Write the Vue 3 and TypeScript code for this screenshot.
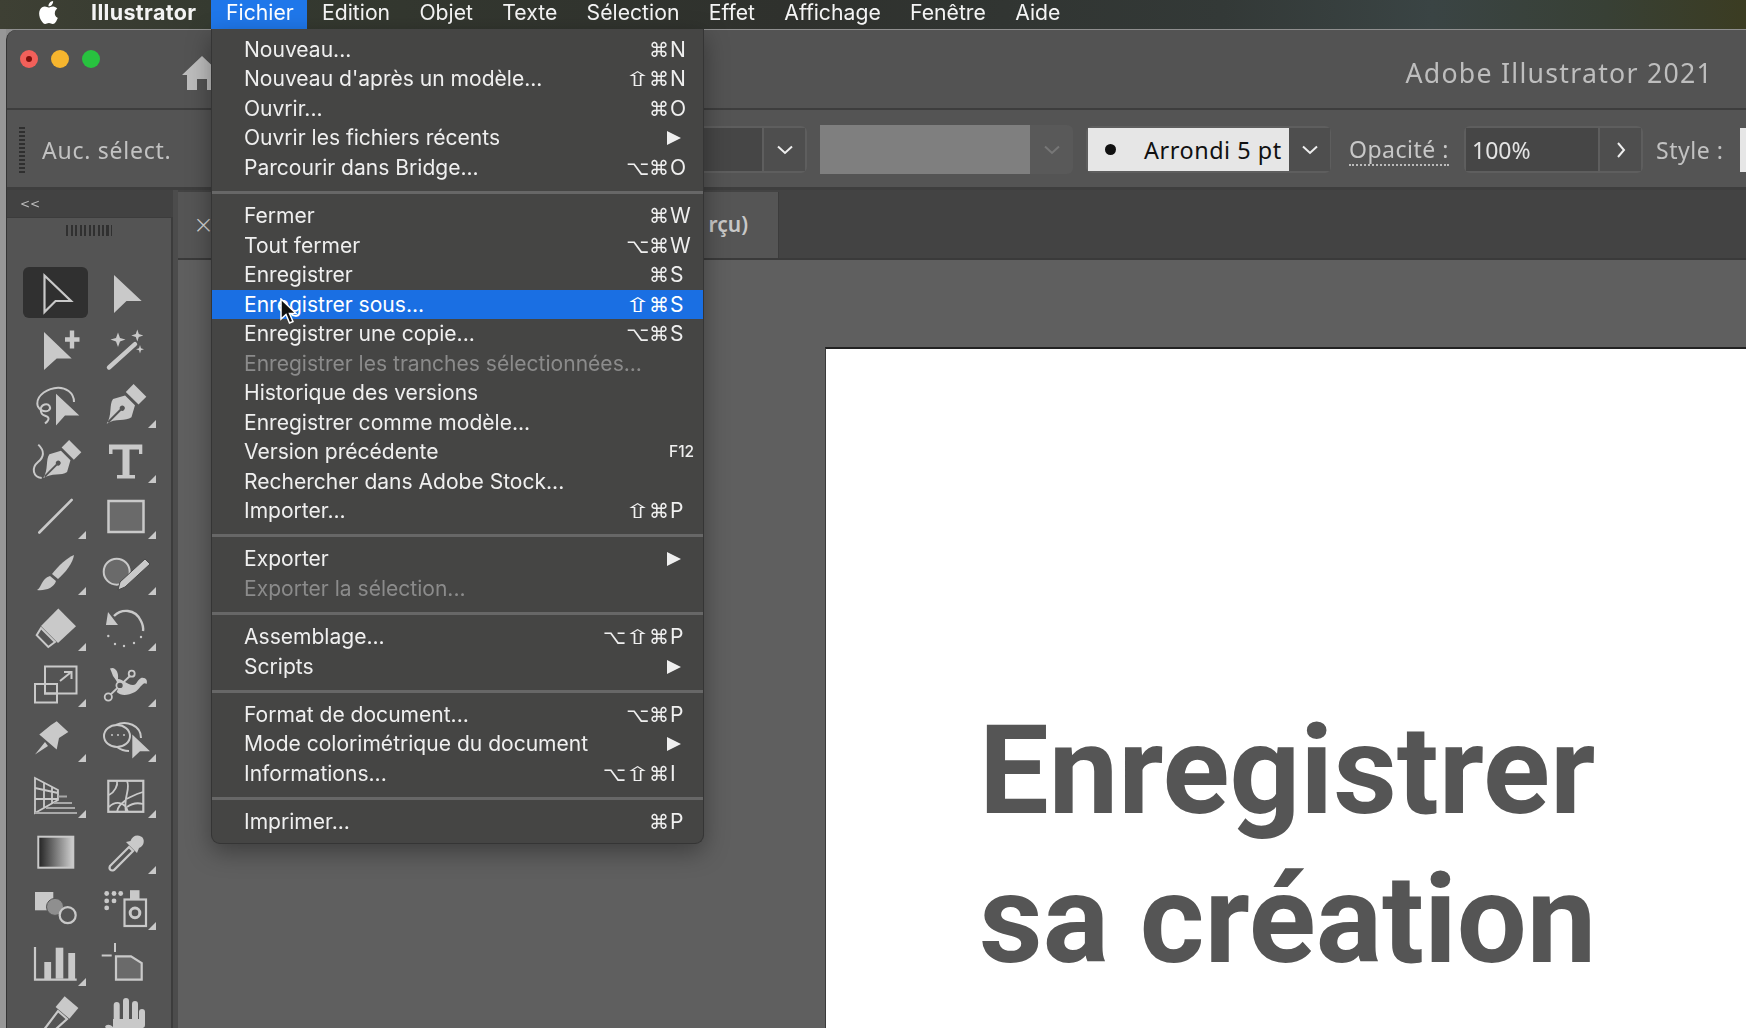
<script setup lang="ts">
interface Entry { label?: string; mods?: string; key?: string; small?: boolean; sub?: boolean; off?: boolean; on?: boolean; sep?: boolean }
const menus = ['Edition', 'Objet', 'Texte', 'Sélection', 'Effet', 'Affichage', 'Fenêtre', 'Aide']
const entries: Entry[] = [
  { label: 'Nouveau...', mods: '⌘', key: 'N' },
  { label: "Nouveau d'après un modèle...", mods: '⇧⌘', key: 'N' },
  { label: 'Ouvrir...', mods: '⌘', key: 'O' },
  { label: 'Ouvrir les fichiers récents', sub: true },
  { label: 'Parcourir dans Bridge...', mods: '⌥⌘', key: 'O' },
  { sep: true },
  { label: 'Fermer', mods: '⌘', key: 'W' },
  { label: 'Tout fermer', mods: '⌥⌘', key: 'W' },
  { label: 'Enregistrer', mods: '⌘', key: 'S' },
  { label: 'Enregistrer sous...', mods: '⇧⌘', key: 'S', on: true },
  { label: 'Enregistrer une copie...', mods: '⌥⌘', key: 'S' },
  { label: 'Enregistrer les tranches sélectionnées...', off: true },
  { label: 'Historique des versions' },
  { label: 'Enregistrer comme modèle...' },
  { label: 'Version précédente', key: 'F12', small: true },
  { label: 'Rechercher dans Adobe Stock...' },
  { label: 'Importer...', mods: '⇧⌘', key: 'P' },
  { sep: true },
  { label: 'Exporter', sub: true },
  { label: 'Exporter la sélection...', off: true },
  { sep: true },
  { label: 'Assemblage...', mods: '⌥⇧⌘', key: 'P' },
  { label: 'Scripts', sub: true },
  { sep: true },
  { label: 'Format de document...', mods: '⌥⌘', key: 'P' },
  { label: 'Mode colorimétrique du document', sub: true },
  { label: 'Informations...', mods: '⌥⇧⌘', key: 'I' },
  { sep: true },
  { label: 'Imprimer...', mods: '⌘', key: 'P' },
]

const C = '#c9c9c9'
const BG = '#545454'
const nib = (t: string, s = 1) => `<g transform="${t} scale(${s})"><path fill="${C}" d="M0 0C-2-10-12-15-13-22L-7-33H7L13-22C12-15 2-10 0 0Z"/><path stroke="${BG}" stroke-width="2" d="M0-2V-20"/><circle cx="0" cy="-22" r="2.6" fill="${BG}"/><rect x="-9" y="-47" width="18" height="11" fill="${C}"/></g>`
const arrow = 'M23 11L50.7 37H35.5L23 49Z'
const icons: { svg: string; corner?: boolean }[] = [
  { svg: `<path d="M23.5 11.5L50 37H34.5L23.5 48Z" fill="none" stroke="${C}" stroke-width="2.2"/>` },
  { svg: `<path d="${arrow}" fill="${C}"/>` },
  { svg: `<path d="M23 12L50.7 38.5H35.7L23 50Z" fill="${C}"/><path d="M51 10.5V28.5M44 19.5H58.5" stroke="${C}" stroke-width="4.4"/>` },
  { svg: `<path d="M18 47.5L44 24.2" stroke="${C}" stroke-width="4.4" stroke-linecap="round"/><path d="M27 12.5L29 18 34.5 19.5 29 21.5 27 27 25 21.5 19.5 19.5 25 18ZM46.3 9.5L47.8 14 52.3 15.5 47.8 17 46.3 21.5 44.8 17 40.3 15.5 44.8 14ZM49 25L50 28.2 53 29.2 50 30.2 49 33.4 48 30.2 45 29.2 48 28.2Z" fill="${C}"/>` },
  { svg: `<path d="M35 17.7L58.3 39.4H44L35 49.4Z" fill="${C}"/><path d="M53 26C53 16 44 11.5 37 11.7C27 12 16 19 16.3 27.7C16.6 33 23 37 27.5 34.5C31 32 28 27 23.5 28.5C18 30.5 19 38 23.5 39.5C28 41 29.5 43 24 47.5" fill="none" stroke="${C}" stroke-width="2"/>` },
  { svg: nib('translate(15.7 47.7) rotate(45)', 1), corner: true },
  { svg: `<path d="M17.3 13.6C24 20 23 26 17 31C10 37 12 46 20.7 47" fill="none" stroke="${C}" stroke-width="2"/>` + nib('translate(22.3 47) rotate(45)', .96) },
  { svg: `<path d="M18 13.6H51.3V23H48V18.5H38.5V44H44V47.5H26V44H31.5V18.5H21.5V23H18Z" fill="${C}"/>`, corner: true },
  { svg: `<path d="M18.3 45.5L50.7 12.8" stroke="${C}" stroke-width="2.6" stroke-linecap="round"/>`, corner: true },
  { svg: `<rect x="17.5" y="14" width="35" height="31" fill="#6a6a6a" stroke="${C}" stroke-width="2.5"/>`, corner: true },
  { svg: `<path d="M53 12C52 20 44 30 37 36L31 31C38 22 46 15 53 12Z" fill="${C}"/><path d="M29 33L35 38C33 45 24 48 16 47C21 44 20 36 29 33Z" fill="${C}"/>`, corner: true },
  { svg: `<circle cx="25.7" cy="28.7" r="13" fill="#6a6a6a" stroke="${C}" stroke-width="2"/><path d="M54 16L59 21 34 44 27 47 29 39Z" fill="${C}" stroke="#484848" stroke-width="1"/>`, corner: true },
  { svg: `<path d="M37.3 9.5L55 27.2 37 44 20 27Z" fill="${C}"/><path d="M20 29L34 43 27.3 48 15.7 36.2Z" fill="none" stroke="${C}" stroke-width="2"/>`, corner: true },
  { svg: `<path d="M23 17C30 10 44 9 50 22C52 26 52.5 29 52 32" fill="none" stroke="${C}" stroke-width="2.4"/><path d="M17 13L27 26 15 26Z" fill="${C}"/><g fill="${C}"><circle cx="50" cy="38" r="1.2"/><circle cx="43" cy="44" r="1.2"/><circle cx="33" cy="47" r="1.2"/><circle cx="24" cy="45" r="1.2"/><circle cx="17.3" cy="37" r="1.2"/></g>`, corner: true },
  { svg: `<g fill="none" stroke="${C}" stroke-width="2"><rect x="24" y="11.5" width="31.5" height="27"/><rect x="14" y="29" width="22" height="18.5"/><rect x="24" y="29" width="12" height="9.5"/></g><path d="M39 26L49 18M43 17H50.5V24" fill="none" stroke="${C}" stroke-width="2"/>`, corner: true },
  { svg: `<path d="M19 13.5C24 11 28 17 27 24C32 24 36 30 42 30C46 30 46 25 50 23C55 22 57 26 55.5 29C52 26 50 33 44 37C36 41 30 41 25.7 37C30 30 24 24 22 21C21 18 20 16 19 13.5Z" fill="${C}"/><g fill="${BG}" stroke="${C}" stroke-width="1.8"><path d="M17 42L41 19" fill="none"/><circle cx="17.3" cy="42" r="3.6"/><circle cx="40.7" cy="18.7" r="3"/><circle cx="29" cy="30.4" r="3.6"/></g>`, corner: true },
  { svg: `<path d="M18.3 24.6L30 15 35.7 11.3 47.3 22 38 28 35.7 39.6ZM24 32L14 44.6 27 36Z" fill="${C}"/>`, corner: true },
  { svg: `<g fill="none" stroke="${C}" stroke-width="2"><ellipse cx="26" cy="26" rx="13" ry="11"/><path d="M25 15C35 10 50 15 50 28M26 37C30 40 34 41 38 41"/></g><path d="M41.3 24.6L59 41.3H49L41.3 48.6Z" fill="${C}"/><g fill="${C}"><circle cx="21" cy="25" r="1"/><circle cx="27" cy="25" r="1"/><circle cx="33" cy="25" r="1"/></g>`, corner: true },
  { svg: `<g fill="none" stroke="${C}" stroke-width="1.8"><path d="M14 12L37 24V34L14 47ZM14 22L37 27M14 33H37M23 17V42M31 21V37"/></g><g stroke="#a8a8a8" stroke-width="2"><path d="M37 30.5H46M33 37H51M25 42H54"/><path d="M14 47H56"/></g>`, corner: true },
  { svg: `<rect x="17.3" y="14.8" width="35" height="31" fill="none" stroke="${C}" stroke-width="2.2"/><path d="M18 29C24 26 27 19 26 15M18 41C24 35 34 35 37 46M36 15C40 24 32 30 35 46M52 26C44 28 38 32 35 33M52 38C45 36 40 38 36 41M26 46C27 40 30 38 35 34" fill="none" stroke="${C}" stroke-width="1.8"/>`, corner: true },
  { svg: `<defs><linearGradient id="gr"><stop offset="0" stop-color="#222"/><stop offset="1" stop-color="#d0d0d0"/></linearGradient></defs><rect x="17.3" y="14.7" width="35" height="31" fill="url(#gr)" stroke="${C}" stroke-width="2"/>` },
  { svg: `<path d="M19 44L38 25 42 29 23 48C20 49.5 17.5 47 19 44Z" fill="none" stroke="${C}" stroke-width="2.2"/><path d="M35 20L46 31 48 26C54 24 54 16 50 14.5C46 12 41 14 39.5 19Z" fill="${C}"/>`, corner: true },
  { svg: `<rect x="14" y="14" width="18.3" height="18.3" fill="${C}"/><circle cx="34" cy="28.9" r="8.5" fill="#8f8f8f" stroke="${BG}" stroke-width="1"/><circle cx="46.7" cy="37.2" r="8" fill="${BG}" stroke="${C}" stroke-width="2.2"/>` },
  { svg: `<g fill="${C}"><circle cx="15.7" cy="15.5" r="2.4"/><circle cx="23" cy="15.5" r="2.4"/><circle cx="29.7" cy="15.5" r="2.4"/><circle cx="15.7" cy="22.9" r="2.4"/><circle cx="23" cy="22.9" r="2.4"/><circle cx="15.7" cy="29.9" r="2.4"/><rect x="39" y="12.2" width="9.5" height="9"/></g><rect x="33.5" y="21.5" width="21.5" height="26.5" fill="none" stroke="${C}" stroke-width="2.2"/><circle cx="44" cy="34.9" r="4.8" fill="none" stroke="${C}" stroke-width="3"/>`, corner: true },
  { svg: `<path d="M14 13V45.7H55.7" fill="none" stroke="${C}" stroke-width="2.2"/><g fill="${C}"><rect x="23.3" y="28" width="6.8" height="17"/><rect x="34.7" y="13.7" width="7.6" height="31"/><rect x="47.3" y="19" width="6.8" height="26"/></g>`, corner: true },
  { svg: `<path d="M24 9V18M10.7 21.4H20.7" stroke="${C}" stroke-width="2"/><path d="M25 22.4H40L50.7 29V45.7H25Z" fill="#6a6a6a" stroke="${C}" stroke-width="2.2"/>` },
  { svg: `<path d="M16 50L37 22 46 30 24 50" fill="none" stroke="${C}" stroke-width="2.2"/><rect x="-9" y="-7" width="18" height="14" transform="translate(46 18.5) rotate(40)" fill="${C}"/>` },
  { svg: `<path d="M25.7 34V16M35 32V12M44 32V15M51 36V23" stroke="${C}" stroke-width="6" stroke-linecap="round"/><path d="M22 30H52V42C50 50 44 54 36 54H30L14 38C15 35 19 35 22 38Z" fill="${C}"/>` },
]
</script>

<template>
  <div class="app">
    <header class="menubar">
      <svg class="apple" viewBox="0 0 24 24" width="23" height="23"><path fill="#fff" d="M12.152 6.896c-.948 0-2.415-1.078-3.96-1.04-2.04.027-3.91 1.183-4.961 3.014-2.117 3.675-.546 9.103 1.519 12.09 1.013 1.454 2.208 3.09 3.792 3.039 1.52-.065 2.09-.987 3.935-.987 1.831 0 2.35.987 3.96.948 1.637-.026 2.676-1.48 3.676-2.948 1.156-1.688 1.636-3.325 1.662-3.415-.039-.013-3.182-1.221-3.22-4.857-.026-3.04 2.48-4.494 2.597-4.559-1.429-2.09-3.623-2.324-4.39-2.376-2-.156-3.675 1.09-4.61 1.09zM15.53 3.83c.843-1.012 1.4-2.427 1.245-3.83-1.207.052-2.662.805-3.532 1.818-.78.896-1.454 2.338-1.273 3.714 1.338.104 2.715-.688 3.559-1.701"/></svg>
      <span class="appname">Illustrator</span>
      <div class="fichier">
        <span>Fichier</span>
        <div class="dropdown">
          <template v-for="(e, i) in entries" :key="i">
            <div v-if="e.sep" class="sep"></div>
            <div v-else class="entry" :class="{ off: e.off, on: e.on }">
              <span class="label">{{ e.label }}</span>
              <i v-if="e.sub" class="sub"></i>
              <template v-else-if="e.key">
                <span class="mods"><span v-for="(g, j) in (e.mods ?? '')" :key="j" :class="{ shift: g === '⇧' }">{{ g }}</span></span>
                <span class="key" :class="{ small: e.small }">{{ e.key }}</span>
              </template>
              <svg v-if="e.on" class="cursor" viewBox="0 0 18 28" width="18" height="28"><path d="M2 1V21L7 16.5 10.5 25 14 23.5 10.5 15.5H17Z" fill="#111" stroke="#fff" stroke-width="1.5"/></svg>
            </div>
          </template>
        </div>
      </div>
      <nav class="menus"><span v-for="m in menus" :key="m">{{ m }}</span></nav>
    </header>

    <div class="desk">
      <div class="strip"></div>
      <div class="window">
        <div class="titlebar">
          <i class="light red"><b></b></i><i class="light yellow"></i><i class="light green"></i>
          <svg class="home" viewBox="0 0 40 36" width="40" height="36"><path fill="#bdbdbd" d="M20 1L0 20H5V35H15V24H25V35H35V20H40Z"/></svg>
          <span class="apptitle">Adobe Illustrator 2021</span>
        </div>
        <div class="controlbar">
          <span class="grip"></span>
          <span class="noselect">Auc. sélect.</span>
          <div class="combo first"><span class="field"></span><span class="chev"><svg viewBox="0 0 18 10" width="18" height="10"><path d="M2 1.5L9 8 16 1.5" fill="none" stroke="#eee" stroke-width="2"/></svg></span></div>
          <div class="graybox"><span class="fill"></span><span class="chev flat"><svg viewBox="0 0 18 10" width="18" height="10"><path d="M2 1.5L9 8 16 1.5" fill="none" stroke="#777" stroke-width="2"/></svg></span></div>
          <div class="combo brush"><span class="brushfield"><i class="dot"></i>Arrondi 5 pt</span><span class="chev"><svg viewBox="0 0 18 10" width="18" height="10"><path d="M2 1.5L9 8 16 1.5" fill="none" stroke="#eee" stroke-width="2"/></svg></span></div>
          <span class="opacity">Opacité :</span>
          <div class="combo pct"><span class="field">100%</span><span class="chev"><svg viewBox="0 0 10 18" width="10" height="18"><path d="M2 2L8 9 2 16" fill="none" stroke="#eee" stroke-width="2"/></svg></span></div>
          <span class="stylelbl">Style :</span>
          <span class="stylebox"></span>
        </div>
        <div class="work">
          <aside class="tools">
            <div class="collapse">&lt;&lt;</div>
            <div class="toolbody">
              <div class="toolgrip"></div>
              <div class="toolgrid">
                <div v-for="(t, i) in icons" :key="i" class="tool" :class="{ active: i === 0 }">
                  <svg viewBox="0 0 70 56" width="70" height="56"><g v-html="t.svg"></g><path v-if="t.corner" d="M65 44V52H57Z" fill="#c9c9c9"/></svg>
                </div>
              </div>
            </div>
          </aside>
          <section class="stage">
            <div class="tabbar">
              <div class="tab"><span class="close">×</span><span class="tabname">rçu)</span></div>
            </div>
            <div class="canvas">
              <div class="artboard">
                <h1>Enregistrer<br />sa création</h1>
              </div>
            </div>
          </section>
        </div>
      </div>
    </div>
  </div>
</template>

<style>
html, body { margin: 0; background: #8f8f8f; overflow: hidden; }
</style>

<style scoped>
.app { width: 1746px; height: 1028px; overflow: hidden; display: flex; flex-direction: column; font-family: Inter, "DejaVu Sans", sans-serif; position: relative; filter: blur(.4px); }
.menubar { height: 29px; flex: none; display: flex; align-items: center; position: relative; z-index: 5; color: #f4f4f4; font-size: 21.2px; line-height: 24px; background: linear-gradient(90deg, #3e4034 0, #353a30 12%, #2f312d 45%, #333937 70%, #3a4444 82%, #384035 92%, #3b3c22 100%); }
.menubar > span, .menus, .fichier > span { margin-top: -5px; }
.apple { margin-left: 37px; margin-top: -4px; }
.appname { margin-left: 31px; width: 120px; font-weight: 700; letter-spacing: .35px; font-size: 21.5px; }
.fichier { width: 96px; height: 29px; background: #1f77ea; position: relative; color: #fff; display: flex; align-items: center; padding-left: 15px; box-sizing: border-box; }
.menus { display: flex; gap: 29.3px; margin-left: 15px; }
.dropdown { position: absolute; left: 0; top: 29px; width: 493px; height: 815px; box-sizing: border-box; padding-top: 6px; background: #454544; border: 1px solid #353535; border-top: 0; border-radius: 0 0 9px 9px; box-shadow: 0 8px 24px rgba(0,0,0,.35); font-size: 21.05px; }
.entry { height: 29.5px; display: flex; align-items: center; padding-left: 32px; color: #efefef; position: relative; white-space: nowrap; }
.entry.on { background: #1a6fe3; color: #fff; }
.entry.off { color: #8b8b8b; }
.label { flex: 1; }
.mods { font-family: "DejaVu Sans", sans-serif; font-size: 20px; text-align: right; display: flex; }
.shift { display: inline-block; transform: scaleX(1.6); margin: 0 3.5px 0 3px; }
.key { width: 33px; margin-left: 1px; }
.key.small { font-size: 15.5px; width: 34px; margin-left: -4px; font-weight: 500; }
.sub { width: 0; height: 0; border-left: 14px solid #efefef; border-top: 7.5px solid transparent; border-bottom: 7.5px solid transparent; margin-right: 22px; }
.sep { height: 3px; margin: 8.7px 0 7.1px; background: #676767; }
.cursor { position: absolute; left: 67px; top: 8px; }

.desk { flex: 1; display: flex; min-height: 0; }
.strip { width: 6px; background: #979797; flex: none; }
.window { flex: 1; min-width: 0; display: flex; flex-direction: column; background: #3a3a3a; border-left: 1px solid #333; border-radius: 10px 0 0 0; overflow: hidden; margin-top: 1px; }
.titlebar { height: 80px; flex: none; box-sizing: border-box; border-bottom: 2px solid #3d3d3d; background: #535353; display: flex; align-items: flex-start; gap: 13px; padding: 0 33px 0 13px; }
.light { width: 18px; height: 18px; border-radius: 50%; flex: none; display: flex; align-items: center; justify-content: center; margin-top: 20px; }
.red { background: #f2605a; } .red b { width: 6px; height: 6px; border-radius: 50%; background: #7d0f0a; }
.yellow { background: #f6b52e; } .green { background: #28c23f; }
.home { margin: 25px 0 0 69px; }
.apptitle { margin: 25px 0 0 auto; font-family: "Noto Sans", sans-serif; font-size: 26.7px; line-height: 36px; letter-spacing: 1.25px; color: #bebebe; }
.controlbar { height: 80px; flex: none; box-sizing: border-box; border-bottom: 3px solid #3e3e3e; background: #545454; display: flex; align-items: center; padding: 2px 0 0 12px; font-family: "Noto Sans", sans-serif; font-size: 23px; color: #c2c2c2; white-space: nowrap; }
.grip { width: 6px; height: 46px; flex: none; background: repeating-linear-gradient(180deg, #2f2f2f 0 2px, transparent 2px 4px); }
.noselect { margin-left: 17px; width: 130px; flex: none; letter-spacing: .75px; }
.combo { height: 47px; flex: none; display: flex; box-sizing: border-box; border: 2px solid #5e5e5e; border-radius: 6px; }
.combo.first { width: 167px; margin-left: 468px; }
.field { flex: 1; background: #464646; color: #e4e4e4; display: flex; align-items: center; padding-left: 6px; border-right: 2px solid #5e5e5e; }
.chev { width: 41px; flex: none; display: flex; align-items: center; justify-content: center; background: #4e4e4e; }
.graybox { display: flex; margin-left: 13px; flex: none; height: 49px; }
.fill { width: 210px; background: #7f7f7f; }
.chev.flat { width: 43px; background: #595959; border-radius: 0 6px 6px 0; }
.combo.brush { width: 245px; margin-left: 13px; }
.brushfield { width: 201px; flex: none; background: #e6e6e6; color: #111; display: flex; align-items: center; font-size: 23.4px; padding-left: 17px; box-sizing: border-box; letter-spacing: .55px; }
.dot { width: 11px; height: 11px; border-radius: 50%; background: #111; margin-right: 28px; flex: none; }
.opacity { margin-left: 18px; width: 100px; flex: none; border-bottom: 2px dotted #bbb; line-height: 30px; color: #c8c8c8; letter-spacing: .5px; }
.combo.pct { width: 179px; margin-left: 15px; }
.stylelbl { margin-left: 13px; width: 67px; flex: none; letter-spacing: .55px; }
.stylebox { width: 10px; height: 44px; margin-left: 17px; background: #e6e6e6; flex: none; }
.work { flex: 1; min-height: 0; display: flex; }
.tools { width: 171px; flex: none; background: #4b4b4b; box-sizing: border-box; border-right: 5px solid #4c4c4c; display: flex; flex-direction: column; }
.collapse { height: 27px; flex: none; background: #424242; color: #bdbdbd; font-size: 12px; line-height: 28px; padding-left: 13px; font-family: "DejaVu Sans", sans-serif; letter-spacing: 0; }
.toolbody { flex: 1; background: #545454; border-right: 2px solid #3c3c3c; border-top: 1px solid #3c3c3c; overflow: hidden; }
.toolgrip { width: 46px; height: 11px; margin: 7px 0 0 59px; background: repeating-linear-gradient(90deg, #303030 0 2px, transparent 2px 4.5px); }
.toolgrid { display: grid; grid-template-columns: 70px 70px; grid-auto-rows: 55.8px; margin: 28px 0 0 14px; }
.tool { position: relative; width: 70px; height: 56px; }
.tool.active::before { content: ""; position: absolute; left: 2px; top: 3px; width: 65px; height: 51px; border-radius: 6px; background: #303030; }
.tool svg { position: relative; display: block; }
.stage { flex: 1; min-width: 0; display: flex; flex-direction: column; }
.tabbar { height: 70px; flex: none; box-sizing: border-box; border-bottom: 2px solid #3a3a3a; background: #434343; padding-top: 2px; }
.tab { width: 601px; height: 66px; background: #555; border-right: 1px solid #3c3c3c; display: flex; align-items: center; box-sizing: border-box; padding: 0 30px 2px 15px; color: #c8c8c8; }
.close { font-family: "DejaVu Sans", sans-serif; font-size: 25px; font-weight: 300; color: #d5d5d5; }
.tabname { margin-left: auto; font-family: "Noto Sans", sans-serif; font-weight: 600; font-size: 21px; white-space: nowrap; }
.canvas { flex: 1; min-height: 0; background: #5f5f5f; padding: 87px 0 0 647px; overflow: hidden; }
.artboard { height: 900px; background: #fff; border-top: 2px solid #222; border-left: 1px solid #3a3a3a; box-sizing: border-box; padding: 347px 0 0 153px; }
h1 { margin: 0; font-family: Roboto, sans-serif; font-weight: 700; font-size: 124px; line-height: 149px; color: #555; white-space: nowrap; }
</style>
